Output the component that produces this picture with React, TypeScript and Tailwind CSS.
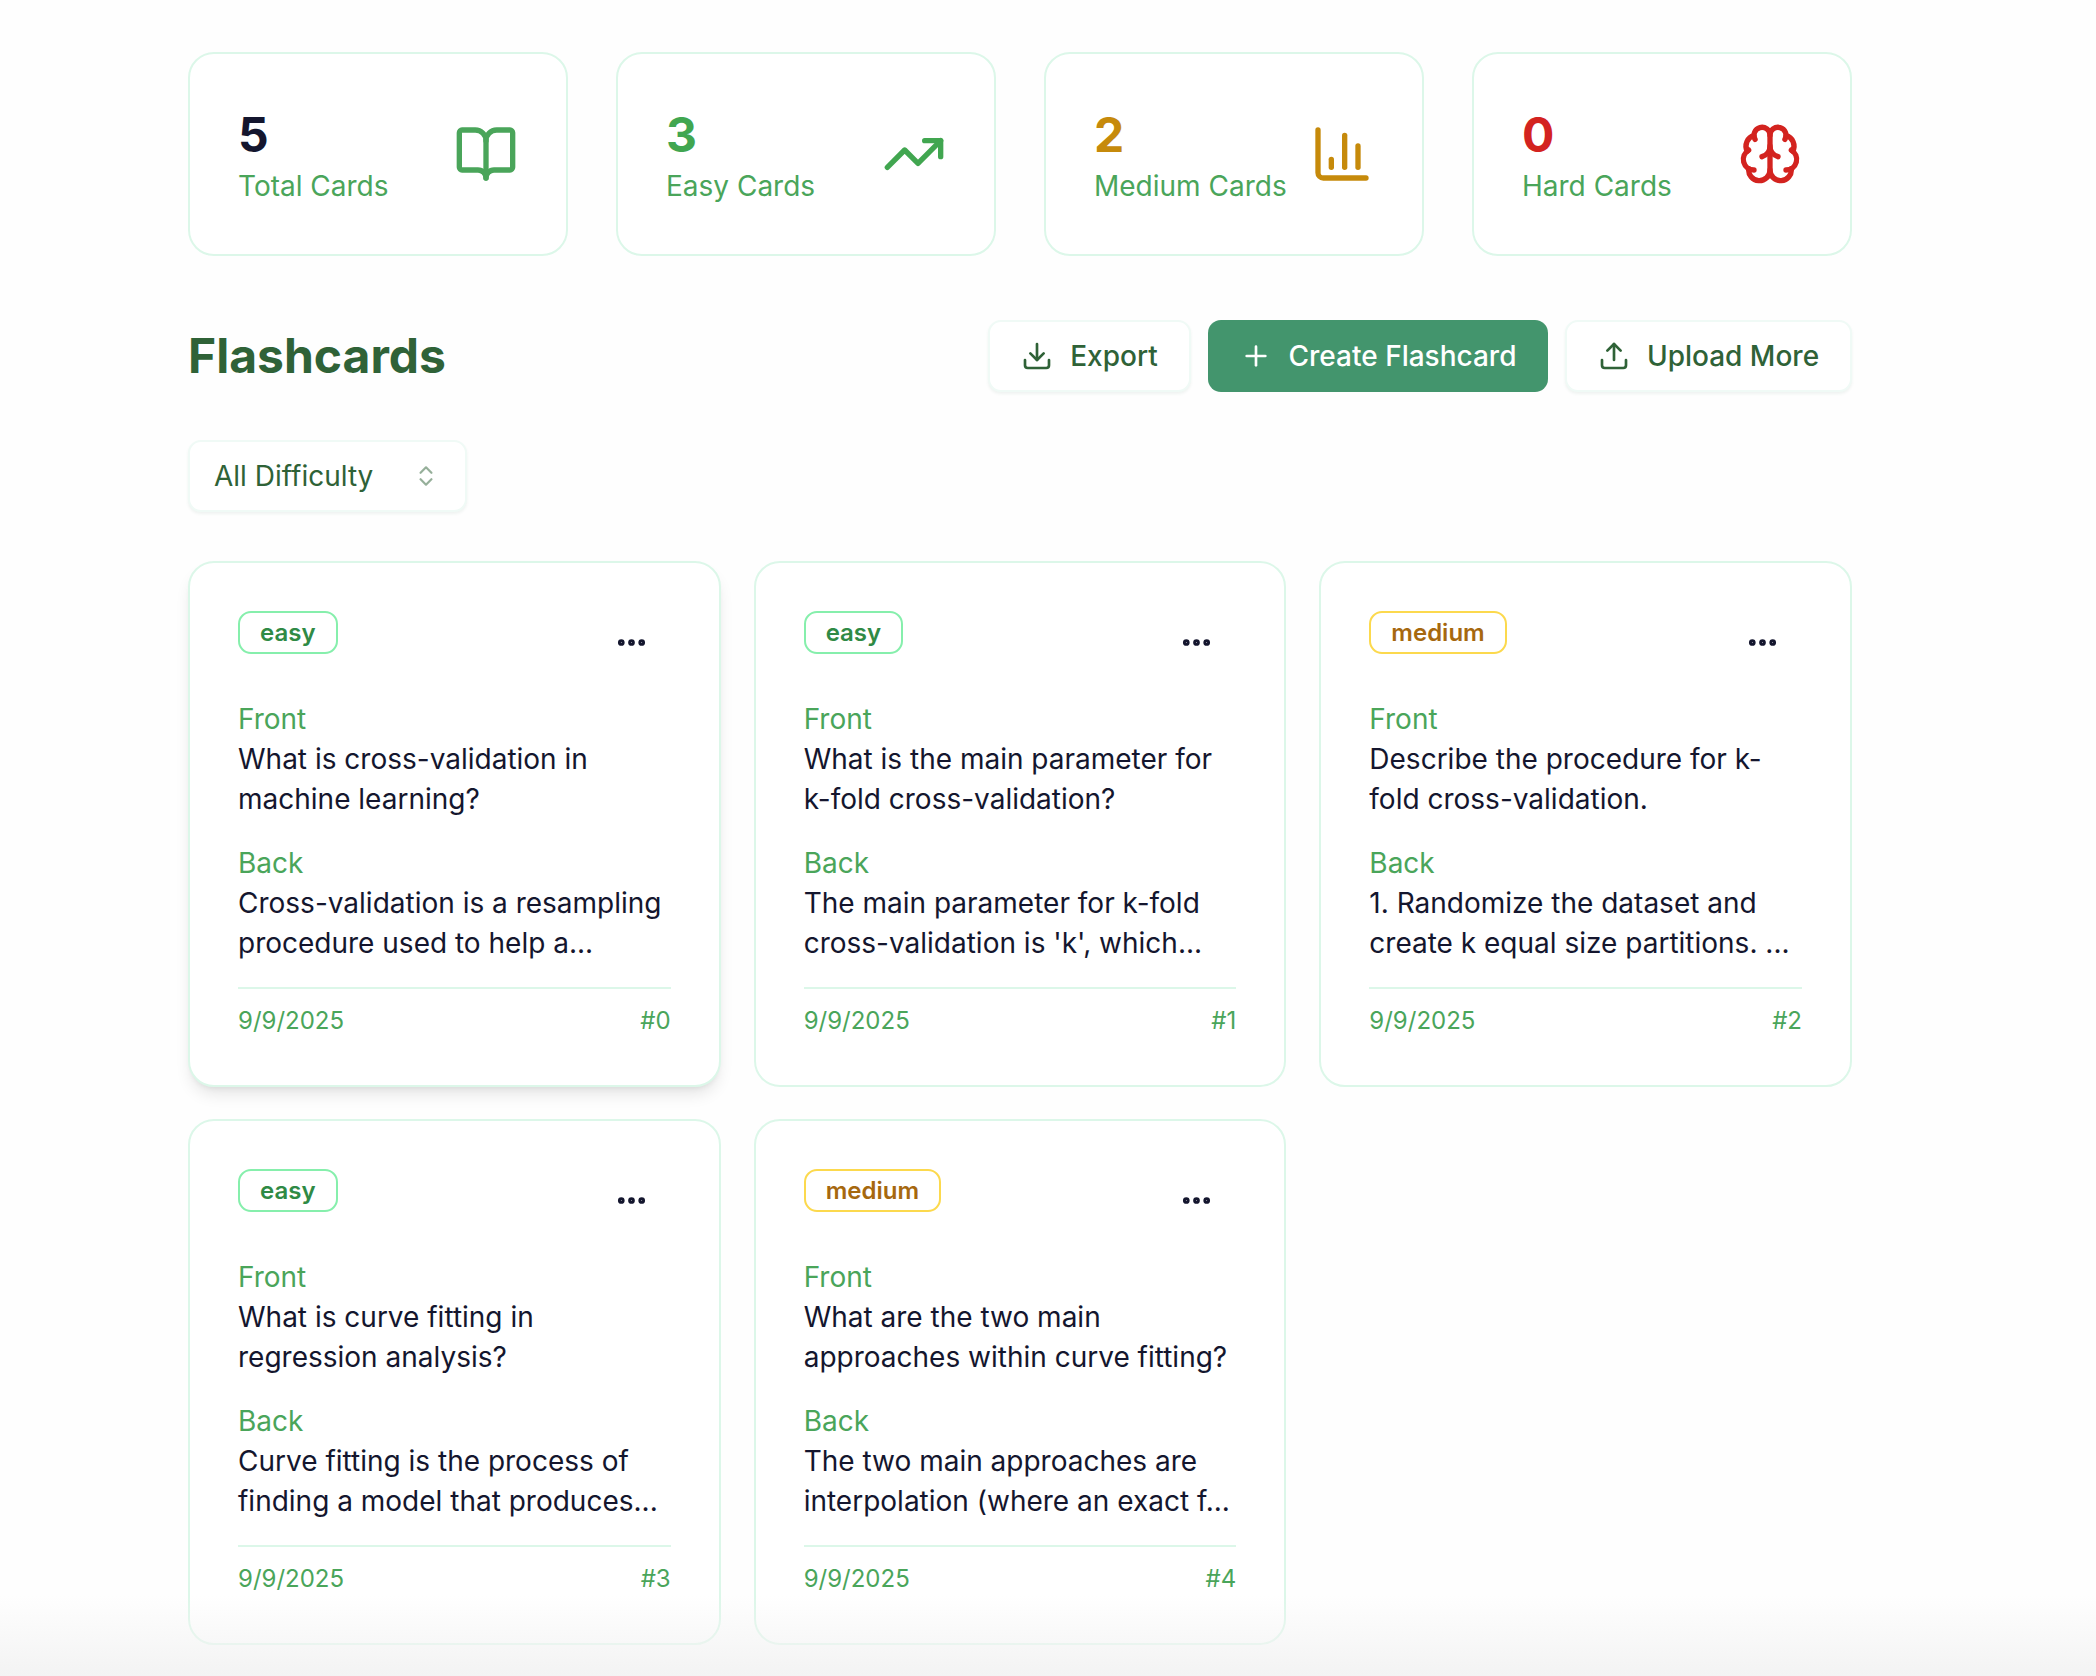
import { BookOpen, TrendingUp, ChartColumn, Brain, Download, Plus, Upload, ChevronsUpDown, Ellipsis } from "lucide-react";

const stats = [
  { n: "5", label: "Total Cards", numC: "text-[#14162e]", iconC: "text-[#4aa55a]", Icon: BookOpen },
  { n: "3", label: "Easy Cards", numC: "text-[#41a650]", iconC: "text-[#41a650]", Icon: TrendingUp },
  { n: "2", label: "Medium Cards", numC: "text-[#c68a0b]", iconC: "text-[#c68a0b]", Icon: ChartColumn },
  { n: "0", label: "Hard Cards", numC: "text-[#d3231f]", iconC: "text-[#d3231f]", Icon: Brain },
];

const cards = [
  { level: "easy", front: "What is cross-validation in machine learning?", back: "Cross-validation is a resampling procedure used to help a...", id: 0 },
  { level: "easy", front: "What is the main parameter for k-fold cross-validation?", back: "The main parameter for k-fold cross-validation is 'k', which...", id: 1 },
  { level: "medium", front: "Describe the procedure for k-fold cross-validation.", back: "1. Randomize the dataset and create k equal size partitions. ...", id: 2 },
  { level: "easy", front: "What is curve fitting in regression analysis?", back: "Curve fitting is the process of finding a model that produces...", id: 3 },
  { level: "medium", front: "What are the two main approaches within curve fitting?", back: "The two main approaches are interpolation (where an exact f...", id: 4 },
];

function OutlineButton({ children, w }: { children: React.ReactNode; w: string }) {
  return (
    <button className={`${w} h-[72px] flex items-center justify-center gap-[17px] rounded-[13px] bg-white border-2 border-[#f0faf6] shadow-[0_2px_3px_rgba(60,120,90,0.08)] text-[#2f6237] text-[28px] font-medium`}>
      {children}
    </button>
  );
}

export default function App() {
  return (
    <div className="relative h-[1676px] overflow-hidden bg-[#fefefe] pt-[52px] pl-[188px] font-['Inter',sans-serif]">
      <div className="w-[1664px]">
        <div className="grid grid-cols-4 gap-[48px]">
          {stats.map((s) => (
            <div key={s.label} className="h-[204px] rounded-[26px] border-2 border-[#dcf7e9] bg-white p-[48px] flex items-center justify-between">
              <div className="pt-[7px]">
                <div className={`text-[48px] leading-[58px] font-bold ${s.numC}`}>{s.n}</div>
                <div className="text-[28px] leading-[45px] text-[#4aa55a]">{s.label}</div>
              </div>
              <s.Icon size={64} className={s.iconC} />
            </div>
          ))}
        </div>

        <div className="mt-[64px] flex items-center justify-between">
          <h1 className="text-[48px] leading-[72px] font-bold text-[#2f6237]">Flashcards</h1>
          <div className="flex gap-[17px]">
            <OutlineButton w="w-[203px]">
              <Download size={32} />
              Export
            </OutlineButton>
            <button className="w-[340px] h-[72px] flex items-center justify-center gap-[17px] rounded-[13px] bg-[#43956d] text-white text-[28px] font-medium">
              <Plus size={32} />
              Create Flashcard
            </button>
            <OutlineButton w="w-[287px]">
              <Upload size={32} />
              Upload More
            </OutlineButton>
          </div>
        </div>

        <div className="mt-[48px] w-[279px] h-[72px] flex items-center justify-between pl-[24px] pr-[26px] rounded-[13px] bg-white border-2 border-[#f0faf6] shadow-[0_2px_3px_rgba(60,120,90,0.08)] text-[#2f6237] text-[28px]">
          All Difficulty
          <ChevronsUpDown size={26} className="opacity-50" />
        </div>

        <div className="mt-[49px] grid grid-cols-3 gap-x-[33px] gap-y-[32px]">
          {cards.map((c) => (
            <div
              key={c.id}
              className={`h-[526px] rounded-[26px] border-2 border-[#dcf7e9] bg-white p-[48px] ${c.id === 0 ? "shadow-[0_10px_16px_-3px_rgba(0,0,0,0.1),0_4px_6px_-4px_rgba(0,0,0,0.1)]" : ""}`}
            >
              <div className="flex justify-between items-start mb-[24px]">
                <span
                  className={`h-[43px] flex items-center px-[20px] rounded-[13px] border-2 text-[24px] font-semibold ${
                    c.level === "easy" ? "border-[#86efac] text-[#2f8a45]" : "border-[#fcd94d] text-[#a6680f]"
                  }`}
                >
                  {c.level}
                </span>
                <button className="w-[79px] h-[64px] pb-[2px] flex items-center justify-center text-[#14162e]">
                  <Ellipsis size={35} strokeWidth={2.6} />
                </button>
              </div>
              <div className="text-[28px] leading-[40px] text-[#4aa55a]">Front</div>
              <div className="text-[28px] leading-[40px] text-[#14162e]">{c.front}</div>
              <div className="mt-[24px] text-[28px] leading-[40px] text-[#4aa55a]">Back</div>
              <div className="text-[28px] leading-[40px] text-[#14162e]">{c.back}</div>
              <div className="mt-[24px] pt-[16px] border-t-2 border-[#dcf7e9] flex justify-between text-[24px] leading-[32px] text-[#4aa55a]">
                <span>9/9/2025</span>
                <span>#{c.id}</span>
              </div>
            </div>
          ))}
        </div>
      </div>
      <div className="absolute inset-x-0 bottom-0 h-[80px] pointer-events-none bg-gradient-to-b from-transparent to-[#f3f3f3]" />
    </div>
  );
}
